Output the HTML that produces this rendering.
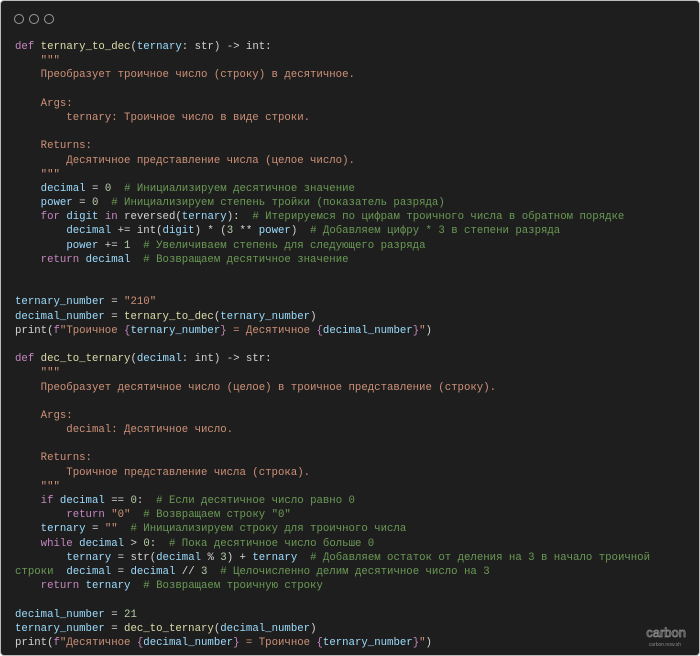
<!DOCTYPE html>
<html><head><meta charset="utf-8"><style>
html,body{margin:0;padding:0;background:#fff;}
.win{position:absolute;left:0;top:0;width:698px;height:654px;background:#1e1e1e;border:1px solid #bbb;border-radius:4px;overflow:hidden;}
.dot{position:absolute;top:13px;width:8px;height:8px;border:1.3px solid #9a9a9a;border-radius:50%;}
pre{position:absolute;left:14px;top:39px;margin:0;font-family:"Liberation Mono","DejaVu Sans Mono",monospace;font-size:10.7px;line-height:14.19px;color:#d4d4d4;}
.k{color:#c586c0}.f{color:#dcdcaa}.v{color:#9cdcfe}.s{color:#ce9178}.c{color:#6a9955}.n{color:#b5cea8}
.logo{position:absolute;right:13px;top:624px;color:#1e1e1e;font-family:"Liberation Sans",sans-serif;font-size:13px;-webkit-text-stroke:0.8px #888;}
.sub{position:absolute;right:18px;top:641px;color:#888;font-family:"Liberation Sans",sans-serif;font-size:5px;}
</style></head><body>
<div class="win">
<div class="dot" style="left:13px"></div><div class="dot" style="left:28px"></div><div class="dot" style="left:43px"></div>
<pre><span class="k">def</span> <span class="f">ternary_to_dec</span>(<span class="v">ternary</span>: str) -&gt; int:
    <span class="s">"""</span>
<span class="s">    Преобразует троичное число (строку) в десятичное.</span>

<span class="s">    Args:</span>
<span class="s">        ternary: Троичное число в виде строки.</span>

<span class="s">    Returns:</span>
<span class="s">        Десятичное представление числа (целое число).</span>
<span class="s">    """</span>
    <span class="v">decimal</span> = <span class="n">0</span>  <span class="c"># Инициализируем десятичное значение</span>
    <span class="v">power</span> = <span class="n">0</span>  <span class="c"># Инициализируем степень тройки (показатель разряда)</span>
    <span class="k">for</span> <span class="v">digit</span> <span class="k">in</span> reversed(<span class="v">ternary</span>):  <span class="c"># Итерируемся по цифрам троичного числа в обратном порядке</span>
        <span class="v">decimal</span> += int(<span class="v">digit</span>) * (<span class="n">3</span> ** <span class="v">power</span>)  <span class="c"># Добавляем цифру * 3 в степени разряда</span>
        <span class="v">power</span> += <span class="n">1</span>  <span class="c"># Увеличиваем степень для следующего разряда</span>
    <span class="k">return</span> <span class="v">decimal</span>  <span class="c"># Возвращаем десятичное значение</span>


<span class="v">ternary_number</span> = <span class="s">"210"</span>
<span class="v">decimal_number</span> = <span class="f">ternary_to_dec</span>(<span class="v">ternary_number</span>)
print(<span class="k">f</span><span class="s">"Троичное </span><span class="k">{</span><span class="v">ternary_number</span><span class="k">}</span><span class="s"> = Десятичное </span><span class="k">{</span><span class="v">decimal_number</span><span class="k">}</span><span class="s">"</span>)

<span class="k">def</span> <span class="f">dec_to_ternary</span>(<span class="v">decimal</span>: int) -&gt; str:
    <span class="s">"""</span>
<span class="s">    Преобразует десятичное число (целое) в троичное представление (строку).</span>

<span class="s">    Args:</span>
<span class="s">        decimal: Десятичное число.</span>

<span class="s">    Returns:</span>
<span class="s">        Троичное представление числа (строка).</span>
<span class="s">    """</span>
    <span class="k">if</span> <span class="v">decimal</span> == <span class="n">0</span>:  <span class="c"># Если десятичное число равно 0</span>
        <span class="k">return</span> <span class="s">"0"</span>  <span class="c"># Возвращаем строку "0"</span>
    <span class="v">ternary</span> = <span class="s">""</span>  <span class="c"># Инициализируем строку для троичного числа</span>
    <span class="k">while</span> <span class="v">decimal</span> &gt; <span class="n">0</span>:  <span class="c"># Пока десятичное число больше 0</span>
        <span class="v">ternary</span> = str(<span class="v">decimal</span> % <span class="n">3</span>) + <span class="v">ternary</span>  <span class="c"># Добавляем остаток от деления на 3 в начало троичной</span>
<span class="c">строки</span>  <span class="v">decimal</span> = <span class="v">decimal</span> // <span class="n">3</span>  <span class="c"># Целочисленно делим десятичное число на 3</span>
    <span class="k">return</span> <span class="v">ternary</span>  <span class="c"># Возвращаем троичную строку</span>

<span class="v">decimal_number</span> = <span class="n">21</span>
<span class="v">ternary_number</span> = <span class="f">dec_to_ternary</span>(<span class="v">decimal_number</span>)
print(<span class="k">f</span><span class="s">"Десятичное </span><span class="k">{</span><span class="v">decimal_number</span><span class="k">}</span><span class="s"> = Троичное </span><span class="k">{</span><span class="v">ternary_number</span><span class="k">}</span><span class="s">"</span>)</pre>
<div class="logo">carbon</div>
<div class="sub">carbon.now.sh</div>
</div>
</body></html>
